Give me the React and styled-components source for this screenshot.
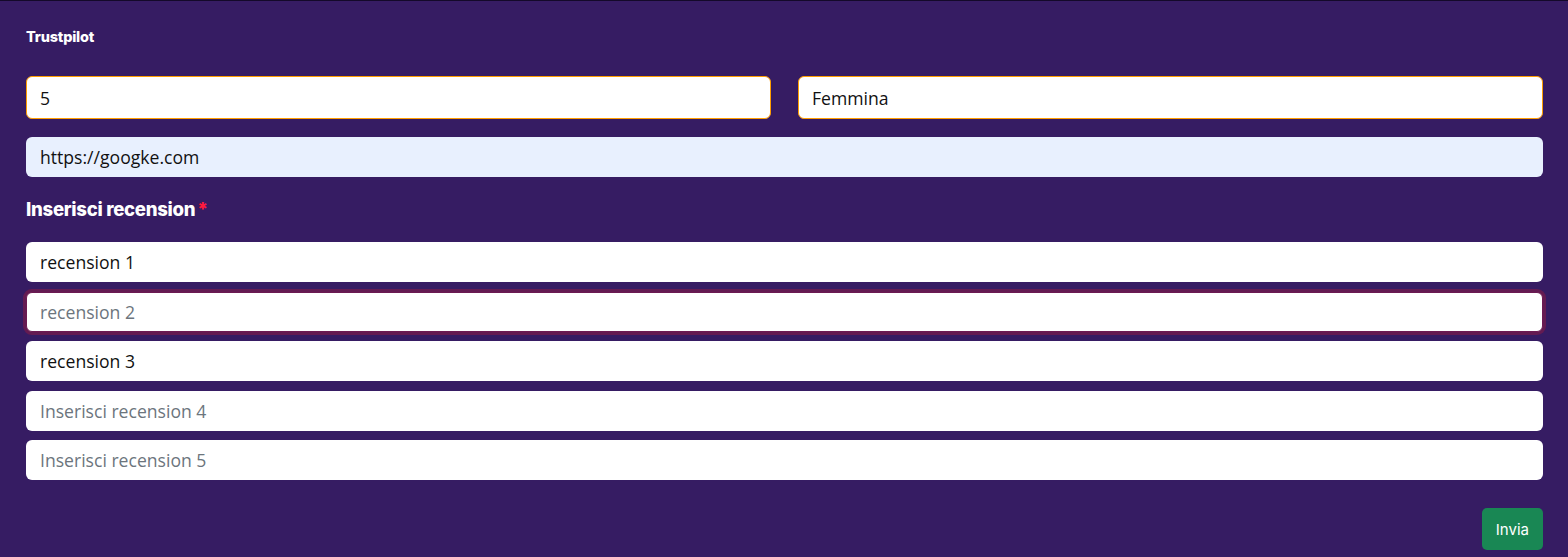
import React from "react";
import styled, { createGlobalStyle } from "styled-components";

const Global = createGlobalStyle`
  html, body { margin: 0; padding: 0; background: #361c63; }
  * { box-sizing: border-box; }
`;

const Card = styled.div`
  width: 1568px;
  height: 557px;
  background: #361c63;
  border-top: 1px solid #14092a;
  padding: 25px 25px 0 26px;
  font-family: "Open Sans", sans-serif;
`;

const Title = styled.h5`
  margin: 0 0 28px 0;
  font-family: "Inter", "Roboto", sans-serif;
  font-weight: 800;
  font-size: 14.5px;
  line-height: 22px;
  color: #fff;
  letter-spacing: -0.2px;
`;

const Row = styled.div`
  display: grid;
  grid-template-columns: 1fr 1fr;
  gap: 27px;
  margin-bottom: 18px;
`;

const Input = styled.input`
  display: block;
  width: 100%;
  height: ${(p) => (p.$tall ? "43px" : "40px")};
  border-radius: 6px;
  border: 1px solid ${(p) => (p.$accent ? "#ff9d00" : p.$focus ? "#6c1a52" : "transparent")};
  background: ${(p) => (p.$autofill ? "#e8f0fe" : "#fff")};
  padding: 0 13px;
  font-family: "Open Sans", sans-serif;
  font-size: 17.6px;
  color: #111;
  outline: none;
  box-shadow: ${(p) => (p.$focus ? "0 0 0 3px #641b52" : "none")};
  &::placeholder { color: #6c757d; }
`;

const Label = styled.div`
  margin: 20px 0 21px 0;
  font-family: "Inter", "Roboto", sans-serif;
  font-weight: 800;
  font-size: 18.6px;
  line-height: 24px;
  color: #fff;
  letter-spacing: -0.3px;
  span { color: #ff1a3c; margin-left: 2px; }
`;

const List = styled.div`
  display: flex;
  flex-direction: column;
  gap: 9.5px;
`;

const Footer = styled.div`
  display: flex;
  justify-content: flex-end;
  margin-top: 28px;
`;

const Button = styled.button`
  background: #198754;
  color: #fff;
  border: none;
  border-radius: 5px;
  height: 42px;
  padding: 0 14px;
  font-family: "Inter", "Roboto", sans-serif;
  font-size: 15px;
`;

export default function App() {
  return (
    <>
      <Global />
      <Card>
        <Title>Trustpilot</Title>
        <Row>
          <Input $accent $tall defaultValue="5" />
          <Input $accent $tall defaultValue="Femmina" />
        </Row>
        <Input $autofill defaultValue="https://googke.com" />
        <Label>
          Inserisci recension<span>*</span>
        </Label>
        <List>
          <Input defaultValue="recension 1" />
          <Input $focus placeholder="recension 2" />
          <Input defaultValue="recension 3" />
          <Input placeholder="Inserisci recension 4" />
          <Input placeholder="Inserisci recension 5" />
        </List>
        <Footer>
          <Button>Invia</Button>
        </Footer>
      </Card>
    </>
  );
}
